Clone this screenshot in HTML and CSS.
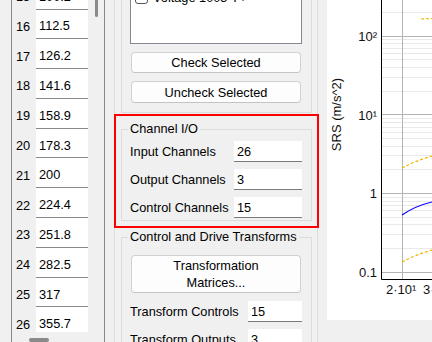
FILE: index.html
```html
<!DOCTYPE html>
<html lang="en">
<head>
  <meta charset="UTF-8" />
  <title>Channel Setup</title>
  <link rel="stylesheet" href="styles.css">
</head>
<body>
  <div class="app">
    <div class="left">
      <div class="table-frame">
        <div class="table-body">
          <div class="rows">
            <div class="row"><span class="num">15</span><span class="val">100.2</span></div>
            <div class="row"><span class="num">16</span><span class="val">112.5</span></div>
            <div class="row"><span class="num">17</span><span class="val">126.2</span></div>
            <div class="row"><span class="num">18</span><span class="val">141.6</span></div>
            <div class="row"><span class="num">19</span><span class="val">158.9</span></div>
            <div class="row"><span class="num">20</span><span class="val">178.3</span></div>
            <div class="row"><span class="num">21</span><span class="val">200</span></div>
            <div class="row"><span class="num">22</span><span class="val">224.4</span></div>
            <div class="row"><span class="num">23</span><span class="val">251.8</span></div>
            <div class="row"><span class="num">24</span><span class="val">282.5</span></div>
            <div class="row"><span class="num">25</span><span class="val">317</span></div>
            <div class="row"><span class="num">26</span><span class="val">355.7</span></div>
          </div>
          <div class="vscroll"><div class="vthumb"></div></div>
        </div>
        <div class="hscroll"><div class="hthumb"></div></div>
      </div>
    </div>

    <div class="middle">
      <div class="outer">
        <div class="grp-list">
          <div class="listbox">
            <div class="list-item"><span class="check"></span><span>Voltage 1005 Y+</span></div>
          </div>
          <div class="btn">Check Selected</div>
          <div class="btn btn-tall">Uncheck Selected</div>
        </div>

        <fieldset class="grp">
          <legend>Channel I/O</legend>
          <div class="io-row first"><span class="io-label">Input Channels</span><span class="field">26</span></div>
          <div class="io-row"><span class="io-label">Output Channels</span><span class="field">3</span></div>
          <div class="io-row"><span class="io-label">Control Channels</span><span class="field">15</span></div>
        </fieldset>

        <fieldset class="grp">
          <legend>Control and Drive Transforms</legend>
          <div class="btn btn-matrix">Transformation<br>Matrices...</div>
          <div class="io-row tf first-tf"><span class="io-label">Transform Controls</span><span class="field">15</span></div>
          <div class="io-row tf"><span class="io-label">Transform Outputs</span><span class="field">3</span></div>
        </fieldset>
      </div>
    </div>

    <div class="plot">
      <svg width="105" height="320" viewBox="0 0 105 320">
        <path class="minor" d="M54 12.5H105 M54 39.5H105 M54 43.5H105 M54 48.5H105 M54 53.5H105 M54 59.5H105 M54 67.5H105 M54 77.5H105 M54 91.5H105
          M54 118.5H105 M54 122.5H105 M54 127.5H105 M54 132.5H105 M54 138.5H105 M54 146.5H105 M54 155.5H105 M54 169.5H105
          M54 197.5H105 M54 201.5H105 M54 205.5H105 M54 210.5H105 M54 217.5H105 M54 224.5H105 M54 234.5H105 M54 248.5H105"/>
        <path class="major" d="M54 36.5H105 M54 114.5H105 M54 193.5H105 M54 272.5H105 M75.5 0V280"/>
        <path class="axis" d="M54.5 0V279.5H105"/>
        <path class="dash" d="M94 19L105 18.5"/>
        <path class="dash" d="M75 168Q88 161 105 156"/>
        <path class="blue" d="M75 215Q88 206 105 202"/>
        <path class="dash" d="M75 262Q88 255 105 250"/>
        <g class="ticks">
          <text x="50" y="41" text-anchor="end">10²</text>
          <text x="50" y="120" text-anchor="end">10¹</text>
          <text x="50" y="198" text-anchor="end">1</text>
          <text x="50" y="277" text-anchor="end">0.1</text>
          <text x="59" y="294">2·10¹</text>
          <text x="96" y="294">3·10¹</text>
        </g>
        <text class="ylabel" transform="translate(13.5 114.5) rotate(-90)" text-anchor="middle">SRS (m/s^2)</text>
      </svg>
    </div>

    <div class="highlight"></div>
  </div>
</body>
</html>
```

FILE: styles.css
```css
body {
  margin: 0;
  background: #f0f0f0;
  font-family: "Liberation Sans", Arial, sans-serif;
  font-size: 12.75px;
  color: #000;
}

.app {
  position: relative;
  display: flex;
  width: 432px;
  height: 342px;
  overflow: hidden;
}

/* left table */

.left {
  flex: none;
  width: 105px;
  padding-left: 11px;
  box-sizing: border-box;
}

.table-frame {
  height: 342px;
  border-left: 1px solid #8a8a8a;
  border-right: 1px solid #8a8a8a;
  display: flex;
  flex-direction: column;
}

.table-body {
  display: flex;
  height: 332px;
  overflow: hidden;
}

.rows {
  width: 76px;
  margin-top: -20.3px;
}

.row {
  display: flex;
  height: 29.8px;
}

.num {
  width: 24px;
  padding: 4px 0 0 4px;
  box-sizing: border-box;
  display: flex;
  align-items: center;
}

.val {
  flex: 1;
  background: #fff;
  border-bottom: 1px solid #8a8a8a;
  padding: 4px 0 0 3px;
  box-sizing: border-box;
  display: flex;
  align-items: center;
}

.vscroll {
  width: 16px;
}

.vthumb {
  margin-left: 7px;
  width: 3px;
  height: 17px;
  background: #8a8a8a;
  border-radius: 0 0 2px 2px;
}

.hscroll {
  height: 10px;
}

.hthumb {
  margin: 6px 0 0 17px;
  width: 20px;
  height: 4px;
  background: #8a8a8a;
  border-radius: 2px;
}

/* middle column */

.middle {
  flex: none;
  width: 222px;
  padding-left: 9px;
  box-sizing: border-box;
}

.outer {
  width: 204px;
  height: 342px;
  box-sizing: border-box;
  border-left: 1px solid #dcdcdc;
  border-right: 1px solid #dcdcdc;
  padding: 0 5px 0 6px;
  display: flex;
  flex-direction: column;
}

.grp-list {
  border: 1px solid #dcdcdc;
  border-top: none;
  padding: 0 9px 9px 8px;
  display: flex;
  flex-direction: column;
}

.listbox {
  height: 60px;
  margin-top: -16px;
  background: #fff;
  border: 1px solid #828790;
  box-sizing: border-box;
}

.list-item {
  display: flex;
  align-items: center;
  gap: 5px;
  padding: 5px 0 0 4px;
}

.check {
  width: 13px;
  height: 13px;
  box-sizing: border-box;
  border: 1px solid #555;
  border-radius: 3px;
  background: #fff;
}

.btn {
  margin: 8px 1px 0;
  height: 21px;
  box-sizing: border-box;
  background: #fdfdfd;
  border: 1px solid #d0d0d0;
  border-bottom-color: #c4c4c4;
  border-radius: 4px;
  display: flex;
  align-items: center;
  justify-content: center;
  text-align: center;
}

.btn-tall {
  height: 22px;
}

.btn-matrix {
  margin: 10px 2px 0 1px;
  height: 38px;
  line-height: 17px;
}

.grp {
  margin: 8px 0 0;
  padding: 0 8px 2px;
  border: 1px solid #dcdcdc;
  min-width: 0;
  flex: none;
}

.grp legend {
  padding: 0 2px;
  margin-left: -2px;
  line-height: 16px;
}

.io-row {
  display: flex;
  height: 21px;
  margin-top: 7px;
}

.io-row.first {
  margin-top: 4px;
}

.io-row.first-tf {
  margin-top: 8px;
}

.io-label {
  width: 104px;
  flex: none;
  display: flex;
  align-items: center;
}

.tf .io-label {
  width: 118px;
}

.field {
  width: 68px;
  box-sizing: border-box;
  background: #fff;
  border-bottom: 1px solid #7a7a7a;
  padding-left: 3px;
  display: flex;
  align-items: center;
}

.tf .field {
  width: 54px;
}

/* plot */

.plot {
  flex: none;
  width: 105px;
  height: 320px;
  background: #fff;
}

.plot svg {
  display: block;
}

.minor {
  stroke: #e9e9e9;
  stroke-width: 1;
  fill: none;
}

.major {
  stroke: #b4b4b4;
  stroke-width: 1;
  fill: none;
}

.axis {
  stroke: #000;
  stroke-width: 1;
  fill: none;
}

.dash {
  stroke: #f2b600;
  stroke-width: 1.2;
  stroke-dasharray: 3 2;
  fill: none;
}

.blue {
  stroke: #0000ff;
  stroke-width: 1.2;
  fill: none;
}

.ticks text {
  font-size: 13px;
  fill: #111;
}

.ylabel {
  font-size: 13px;
  fill: #111;
}

/* annotation */

.highlight {
  position: absolute;
  left: 114px;
  top: 114px;
  width: 205px;
  height: 114px;
  box-sizing: border-box;
  border: 2px solid #f00;
}
```
